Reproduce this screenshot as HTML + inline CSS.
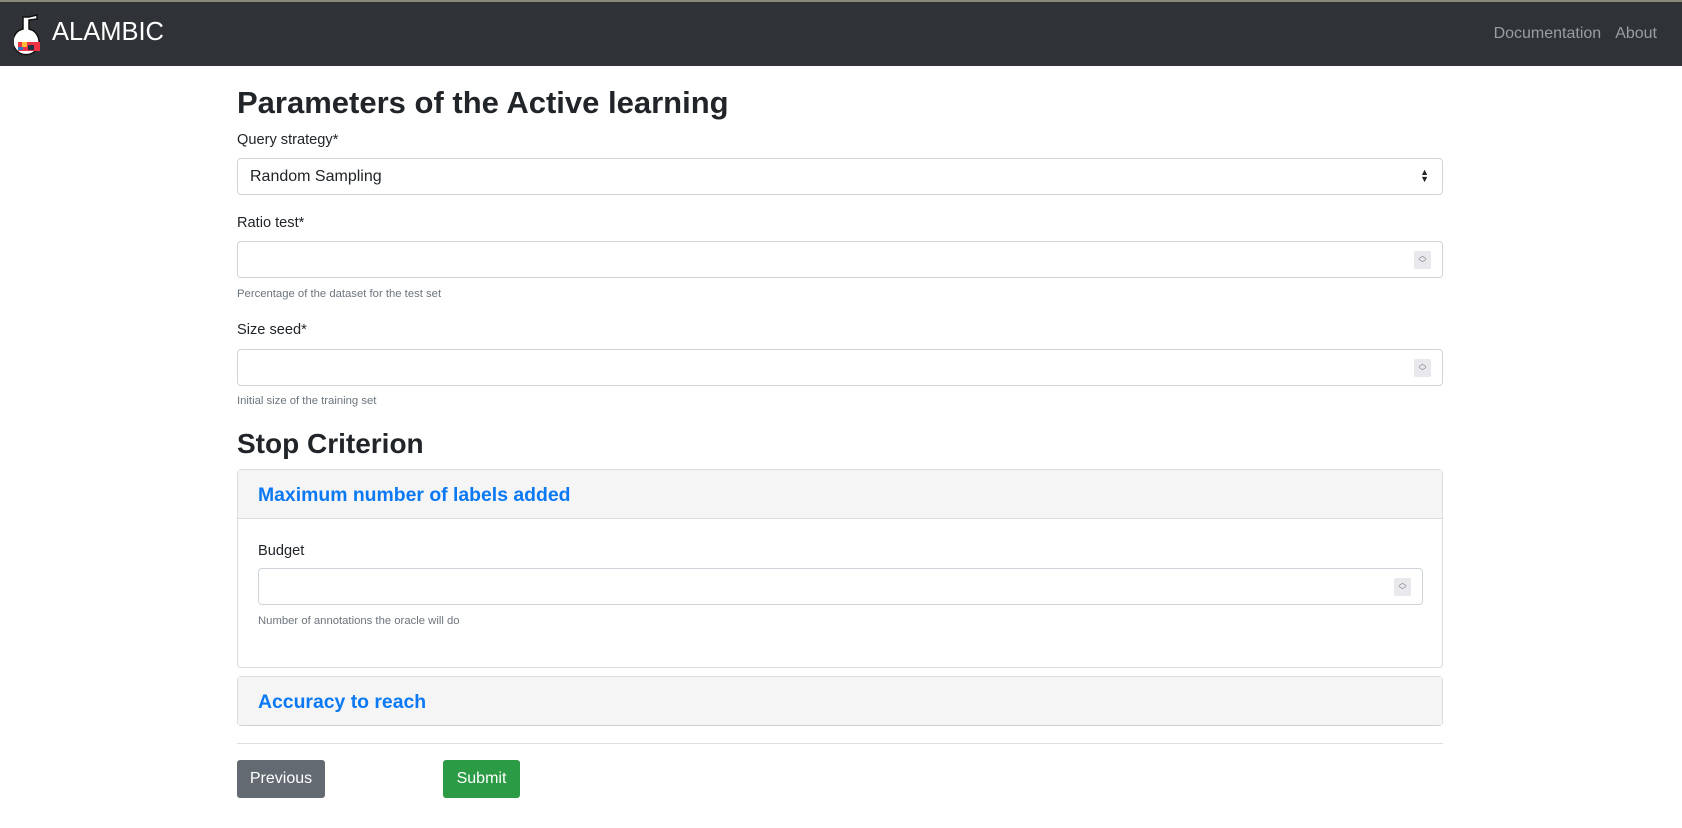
<!DOCTYPE html>
<html><head><style>
*{box-sizing:border-box;margin:0;padding:0}
body{width:1682px;height:828px;overflow:hidden;background:#fff;font-family:"Liberation Sans",Arial,sans-serif;color:#212529;position:relative}
.nav{position:absolute;left:0;top:0;width:1682px;height:66px;background:#2f3337;border-top:2px solid #8a8a7a}
.brand{position:absolute;left:52px;top:16px;color:#fff;font-size:25.5px}
.links{position:absolute;right:25px;top:23px;color:#9a9d9f;font-size:16px}
.links span{margin-left:14px}
.a{position:absolute}
h1{position:absolute;left:237px;font-size:31px;font-weight:bold}
.lbl{position:absolute;left:237px;font-size:14.6px}
.in{position:absolute;left:237px;width:1206px;height:37px;border:1px solid #ced4da;border-radius:4px;background:#fff}
.help{position:absolute;left:237px;font-size:11.3px;color:#6c757d}
.spin{position:absolute;right:11px;top:9px;width:17px;height:18px;background:#e8e8ed;border-radius:2px;font-size:8px;line-height:8px;text-align:center;color:#777;padding-top:1px}
.card{position:absolute;left:237px;width:1206px;border:1px solid #dcdcdc;border-radius:4px;background:#fff}
.ch{height:49px;background:#f5f5f5;border-bottom:1px solid #dcdcdc;color:#0b79f3;font-weight:bold;font-size:19.4px;padding:14px 20px}
.btn{position:absolute;top:760px;height:38px;color:#fff;font-size:16px;border-radius:3px;text-align:center;line-height:38px}
</style></head><body>
<div class="nav">
<svg class="a" style="left:14px;top:12px" width="30" height="42" viewBox="0 0 30 42"><path d="M9 3h6l8-2v4l-8 1v9a13 13 0 1 1-6 0z" fill="#fff" stroke="#111" stroke-width="1.5"/><rect x="4" y="28" width="22" height="9" fill="#e34"/><rect x="8" y="28" width="5" height="5" fill="#fb3"/><rect x="14" y="31" width="6" height="5" fill="#234"/><rect x="4" y="33" width="5" height="3" fill="#37c"/></svg>
<div class="brand">ALAMBIC</div>
<div class="links"><span>Documentation</span><span>About</span></div>
</div>
<h1 style="top:85px">Parameters of the Active learning</h1>
<div class="lbl" style="top:132px">Query strategy*</div>
<div class="in" style="top:158px"><span class="a" style="left:12px;top:9px;font-size:16px">Random Sampling</span><span class="a" style="right:13px;top:10px;font-size:9px;line-height:7px">▲<br>▼</span></div>
<div class="lbl" style="top:215px">Ratio test*</div>
<div class="in" style="top:241px"><div class="spin">︿<br>﹀</div></div>
<div class="help" style="top:288px">Percentage of the dataset for the test set</div>
<div class="lbl" style="top:322px">Size seed*</div>
<div class="in" style="top:349px"><div class="spin">︿<br>﹀</div></div>
<div class="help" style="top:395px">Initial size of the training set</div>
<h1 style="top:428px;font-size:28px">Stop Criterion</h1>
<div class="card" style="top:469px;height:199px"><div class="ch">Maximum number of labels added</div>
<div class="lbl" style="left:20px;top:73px">Budget</div>
<div class="in" style="left:20px;top:98px;width:1165px"><div class="spin">︿<br>﹀</div></div>
<div class="help" style="left:20px;top:145px">Number of annotations the oracle will do</div>
</div>
<div class="card" style="top:676px;height:50px;border-bottom:2px solid #d0d0d0"><div class="ch" style="border:none;height:48px">Accuracy to reach</div></div>
<div class="a" style="left:237px;top:743px;width:1206px;height:1px;background:#e0e0e0"></div>
<div class="btn" style="left:237px;width:88px;background:#636a71">Previous</div>
<div class="btn" style="left:443px;width:77px;background:#2c9b45">Submit</div>
</body></html>
